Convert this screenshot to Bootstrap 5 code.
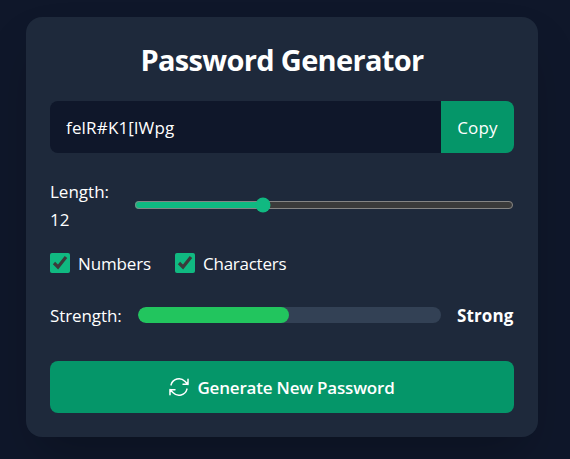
<!DOCTYPE html>
<html lang="en">
<head>
<meta charset="utf-8">
<meta name="viewport" content="width=device-width, initial-scale=1">
<title>Password Generator</title>
<link href="https://cdn.jsdelivr.net/npm/bootstrap@5.3.0/dist/css/bootstrap.min.css" rel="stylesheet">
<style>
  body { background: #0f172a; color: #fff; color-scheme: dark; font: 17px/28px "Segoe UI", "Open Sans", "Noto Sans", sans-serif; overflow: hidden; height: 459px; }
  .panel { width: 512px; height: 420px; margin: 17px 0 0 26px; background: #1e293b; border-radius: 16px; box-shadow: 0 25px 50px -12px rgba(0,0,0,.25); }
  .title { font-size: 29px; line-height: 36px; height: 36px; padding-top: 1px; letter-spacing: -.67px; }
  .field { height: 52px; border-radius: 8px; }
  .secret { background: #0f172a; color: #fff; border: 0; padding: 2px 16px 0; outline: 0; min-width: 0; font-size: 17px; letter-spacing: .17px; }
  .action { background: #059669; color: #fff; border: 0; }
  .copy { width: 73px; letter-spacing: .2px; }
  .copy, .generate span, .caption { padding-top: 2px !important; }
  .caption { line-height: 26px; }
  .len { width: 67px; line-height: 28px; height: 56px; padding-top: 1px !important; }
  .slider { accent-color: #10b981; height: 16px; margin: 2px 0 2px 1px; min-width: 0; }
  .tick { accent-color: #10b981; width: 20px; height: 20px; margin: 0; }
  .numbers { width: 73px; letter-spacing: -.15px; white-space: nowrap; }
  .characters { letter-spacing: -.25px; }
  .meter-track { height: 16px; background: #334155; border-radius: 8px; }
  .meter-fill { background: #22c55e; border-radius: 8px; }
  .word { width: 72px; letter-spacing: -.1px; }
  .level { width: 57px; letter-spacing: .1px; }
  .generate { height: 52px; border-radius: 8px; gap: 6px; letter-spacing: -.2px; padding: 0 8px 0 6px; }
</style>
</head>
<body>
<main class="panel p-4 d-flex flex-column">
  <h1 class="title fw-bold text-center mb-4">Password Generator</h1>
  <div class="field d-flex overflow-hidden mb-4">
    <input class="secret flex-grow-1" type="text" value="felR#K1[lWpg" readonly aria-label="Password">
    <button class="action copy p-0" type="button">Copy</button>
  </div>
  <div class="d-flex align-items-center gap-3 mb-3">
    <label class="caption len flex-shrink-0" for="length">Length: 12</label>
    <input class="slider flex-grow-1" id="length" type="range" min="4" max="28" value="12">
  </div>
  <div class="d-flex gap-4 mb-4">
    <label class="d-flex align-items-center gap-2"><input class="tick" type="checkbox" checked><span class="caption numbers">Numbers</span></label>
    <label class="d-flex align-items-center gap-2"><input class="tick" type="checkbox" checked><span class="caption characters">Characters</span></label>
  </div>
  <div class="d-flex align-items-center gap-3">
    <span class="caption word text-nowrap">Strength:</span>
    <div class="meter-track flex-grow-1 overflow-hidden"><div class="meter-fill h-100" style="width:49.8%"></div></div>
    <span class="caption level fw-bold text-nowrap">Strong</span>
  </div>
  <button class="action generate w-100 mt-auto d-flex align-items-center justify-content-center fw-semibold" type="button">
    <svg width="24" height="24" viewBox="0 0 24 24" fill="none" stroke="currentColor" stroke-width="1.5" stroke-linecap="round" stroke-linejoin="round" aria-hidden="true"><path d="M16.023 9.348h4.992v-.001M2.985 19.644v-4.992m0 0h4.992m-4.993 0 3.181 3.183a8.25 8.25 0 0 0 13.803-3.7M4.031 9.865a8.25 8.25 0 0 1 13.803-3.7l3.181 3.182m0-4.991v4.99"/></svg>
    <span>Generate New Password</span>
  </button>
</main>
<script src="https://cdn.jsdelivr.net/npm/bootstrap@5.3.0/dist/js/bootstrap.bundle.min.js"></script>
</body>
</html>
